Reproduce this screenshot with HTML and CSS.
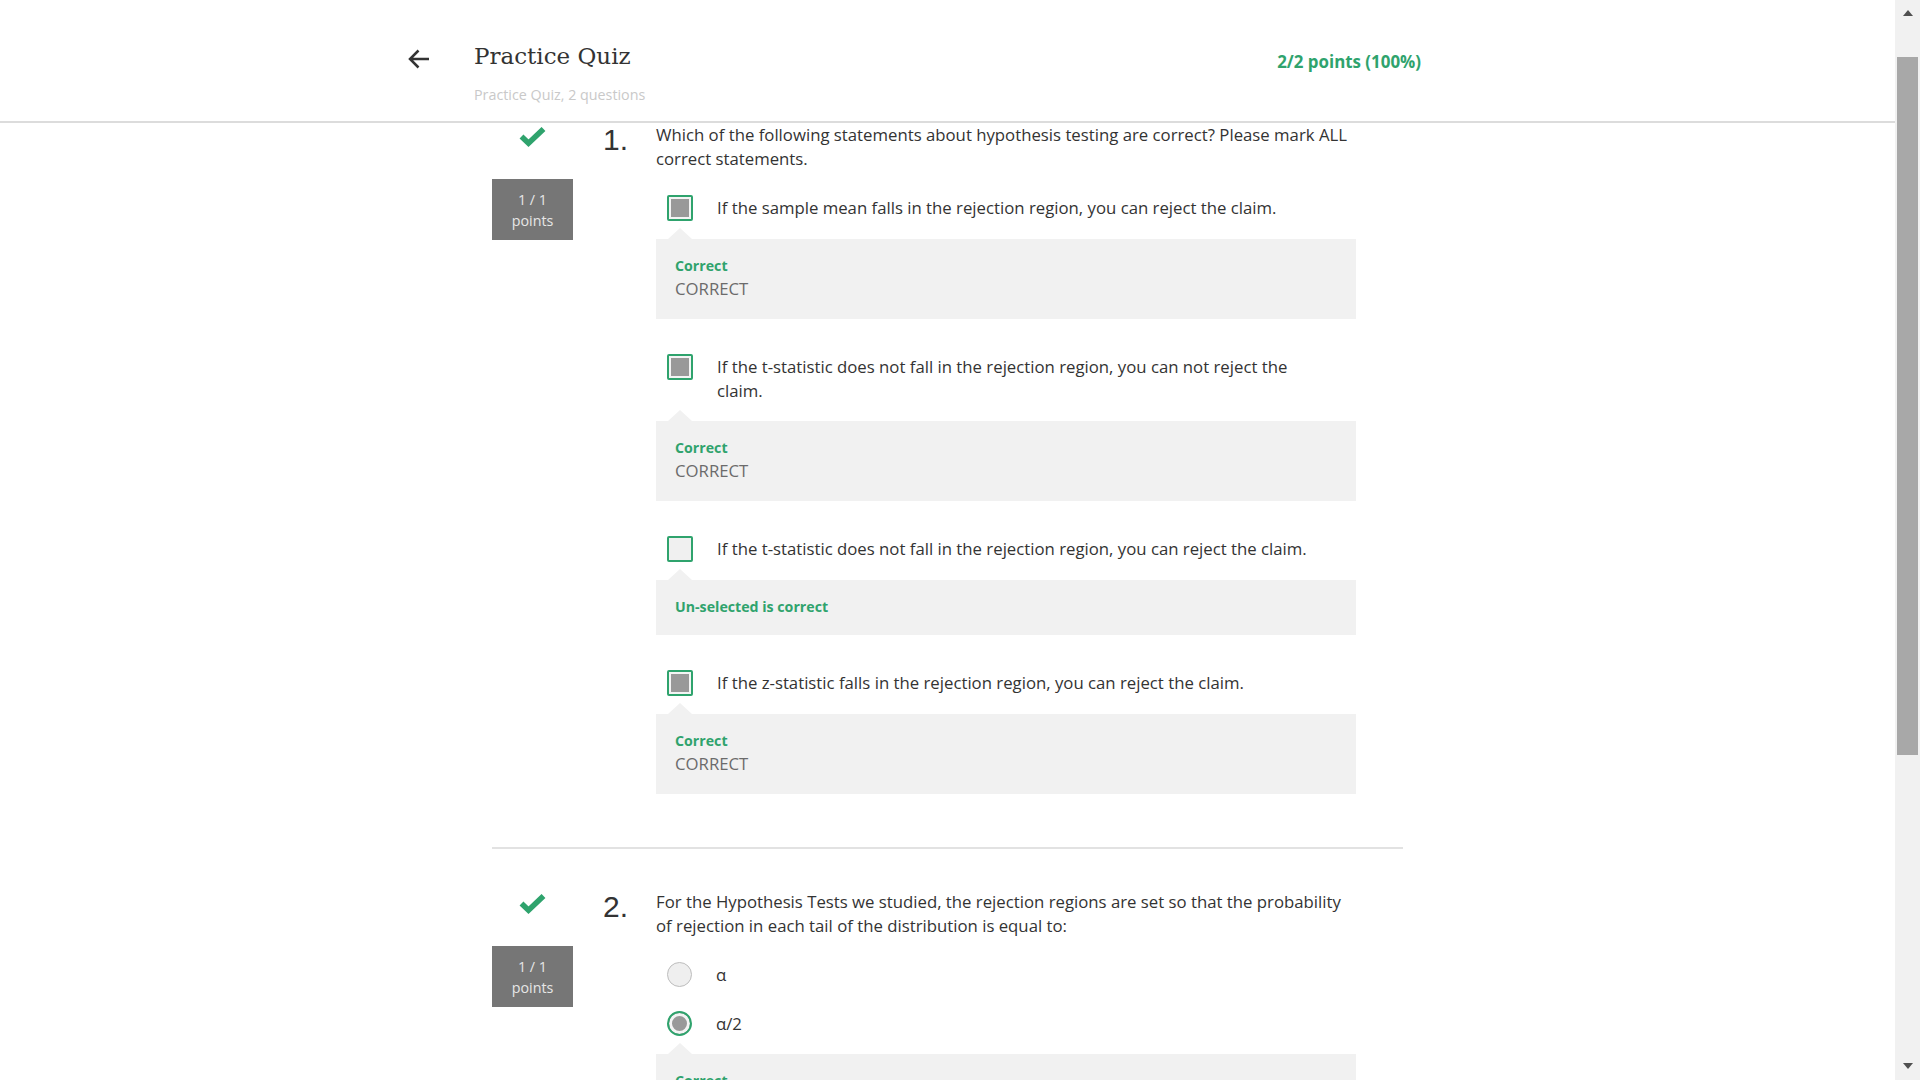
FILE: index.html
```html
<!DOCTYPE html>
<html lang="en">
<head>
<meta charset="utf-8">
<title>Practice Quiz</title>
<link rel="stylesheet" href="styles.css">
</head>
<body>
<div class="window">
  <div class="page">
    <header class="topbar">
      <div class="topbar-inner">
        <button class="back" type="button" aria-label="Back">
          <svg width="23" height="22" viewBox="0 0 23 22"><path d="M22 11H3M11.5 2.5L3 11l8.5 8.5" fill="none" stroke="#333" stroke-width="2.5"/></svg>
        </button>
        <div class="titles">
          <h1 class="title">Practice Quiz</h1>
          <div class="subtitle">Practice Quiz, 2 questions</div>
        </div>
        <div class="score">2/2 points (100%)</div>
      </div>
    </header>

    <main class="content">
      <section class="question">
        <div class="q-side">
          <svg class="check" width="27" height="21" viewBox="0 0 27 21"><polyline points="2.5,9.5 9.5,16.2 24.5,2" fill="none" stroke="#2fa36d" stroke-width="5.6"/></svg>
          <div class="points">1 / 1<br>points</div>
        </div>
        <div class="q-num">1.</div>
        <div class="q-body">
          <p class="q-text">Which of the following statements about hypothesis testing are correct? Please mark ALL correct statements.</p>

          <div class="option">
            <div class="opt-row">
              <span class="checkbox checked"></span>
              <span class="opt-text">If the sample mean falls in the rejection region, you can reject the claim.</span>
            </div>
            <div class="feedback">
              <div class="fb-label">Correct</div>
              <div class="fb-text">CORRECT</div>
            </div>
          </div>

          <div class="option">
            <div class="opt-row">
              <span class="checkbox checked"></span>
              <span class="opt-text">If the t-statistic does not fall in the rejection region, you can not reject the claim.</span>
            </div>
            <div class="feedback">
              <div class="fb-label">Correct</div>
              <div class="fb-text">CORRECT</div>
            </div>
          </div>

          <div class="option">
            <div class="opt-row">
              <span class="checkbox"></span>
              <span class="opt-text">If the t-statistic does not fall in the rejection region, you can reject the claim.</span>
            </div>
            <div class="feedback">
              <div class="fb-label">Un-selected is correct</div>
            </div>
          </div>

          <div class="option">
            <div class="opt-row">
              <span class="checkbox checked"></span>
              <span class="opt-text">If the z-statistic falls in the rejection region, you can reject the claim.</span>
            </div>
            <div class="feedback">
              <div class="fb-label">Correct</div>
              <div class="fb-text">CORRECT</div>
            </div>
          </div>
        </div>
      </section>

      <hr class="divider">

      <section class="question">
        <div class="q-side">
          <svg class="check" width="27" height="21" viewBox="0 0 27 21"><polyline points="2.5,9.5 9.5,16.2 24.5,2" fill="none" stroke="#2fa36d" stroke-width="5.6"/></svg>
          <div class="points">1 / 1<br>points</div>
        </div>
        <div class="q-num">2.</div>
        <div class="q-body">
          <p class="q-text">For the Hypothesis Tests we studied, the rejection regions are set so that the probability of rejection in each tail of the distribution is equal to:</p>

          <div class="option">
            <div class="opt-row">
              <span class="radio"></span>
              <span class="opt-text">α</span>
            </div>
          </div>

          <div class="option">
            <div class="opt-row">
              <span class="radio checked"></span>
              <span class="opt-text">α/2</span>
            </div>
            <div class="feedback">
              <div class="fb-label">Correct</div>
              <div class="fb-text">CORRECT</div>
            </div>
          </div>
        </div>
      </section>
    </main>
  </div>

  <div class="scrollbar">
    <span class="sb-up"></span>
    <span class="sb-thumb"></span>
    <span class="sb-down"></span>
  </div>
</div>
</body>
</html>
```

FILE: styles.css
```css
* { box-sizing: border-box; }
html, body { margin: 0; height: 100%; }
body {
  font-family: "Open Sans", "Liberation Sans", sans-serif;
  color: #333;
  background: #fff;
  overflow: hidden;
}
.window { display: flex; height: 100vh; }
.page { flex: 1; min-width: 0; display: flex; flex-direction: column; overflow: hidden; }

/* header */
.topbar { flex: none; height: 123px; border-bottom: 2px solid #dcdcdc; }
.topbar-inner { margin-left: 407px; width: 1014px; display: flex; align-items: flex-start; }
.back { margin-top: 48px; width: 23px; height: 22px; padding: 0; border: 0; background: none; display: block; }
.back svg { display: block; }
.titles { margin-left: 44px; margin-top: 41px; }
.title { margin: 0; font-family: "DejaVu Serif", serif; font-weight: normal; font-size: 23px; line-height: 30px; color: #333; }
.subtitle { margin-top: 15px; font-size: 14.3px; line-height: 18px; color: #c9c9c9; }
.score { margin-left: auto; margin-top: 51px; font-weight: 700; font-size: 16.9px; line-height: 22px; color: #2fa36d; }

/* content */
.content { width: 911px; margin: 0 auto; flex: none; }
.question { display: flex; align-items: flex-start; }
.q-side { width: 81px; flex: none; display: flex; flex-direction: column; align-items: center; padding-top: 4px; }
.check { display: block; }
.points {
  margin-top: 31px; width: 81px; height: 61px; padding-top: 10px;
  background: #767676; color: #e6e6e6;
  font-size: 14.3px; line-height: 21px; text-align: center;
}
.q-num {
  width: 83px; flex: none; padding-left: 30px; padding-top: 2px;
  font-family: "Liberation Sans", Arial, sans-serif; font-size: 30px; line-height: 30px; color: #333;
}
.q-body { width: 700px; flex: none; display: flex; flex-direction: column; }
.q-text { margin: 0; font-size: 16.75px; line-height: 24px; color: #333; }

.option { margin-top: 24px; }
.opt-row { display: flex; align-items: flex-start; padding-left: 11px; }
.opt-text { margin-left: 24px; margin-top: 1px; max-width: 605px; font-size: 16.75px; line-height: 24px; color: #333; }

.checkbox {
  flex: none; width: 26px; height: 26px;
  border: 2px solid #2fa36d; border-radius: 2px;
  background: #f0f0f0;
}
.checkbox.checked { background: #999; box-shadow: inset 0 0 0 2px #f4f4f4; }

.radio {
  flex: none; width: 25px; height: 25px; border-radius: 50%;
  border: 1px solid #bdbdbd; background: #efefef;
}
.radio.checked { border: 2.5px solid #2fa36d; background: #999; box-shadow: inset 0 0 0 3px #f4f4f4; }

.feedback {
  position: relative;
  margin-top: 18px; margin-bottom: 11px;
  padding: 17px 19px 18px;
  background: #f1f1f1;
}
.feedback::before {
  content: ""; position: absolute; left: 12px; top: -11px;
  border-left: 12px solid transparent; border-right: 12px solid transparent;
  border-bottom: 11px solid #f1f1f1;
}
.fb-label { font-weight: 700; font-size: 14.2px; line-height: 20px; color: #2fa36d; }
.fb-text { font-size: 16.75px; line-height: 25px; color: #6b6b6b; }

.divider { border: 0; height: 2px; background: #e2e2e2; margin: 42px 0 41px; }

/* scrollbar */
.scrollbar { flex: none; width: 25px; background: #f1f1f1; display: flex; flex-direction: column; align-items: center; }
.sb-up {
  margin-top: 10px; width: 0; height: 0;
  border-left: 5.5px solid transparent; border-right: 5.5px solid transparent;
  border-bottom: 6px solid #505050;
}
.sb-thumb { margin-top: 41px; width: 21px; height: 698px; background: #a8a8a8; }
.sb-down {
  margin-top: auto; margin-bottom: 11px; width: 0; height: 0;
  border-left: 5.5px solid transparent; border-right: 5.5px solid transparent;
  border-top: 6px solid #505050;
}
```
